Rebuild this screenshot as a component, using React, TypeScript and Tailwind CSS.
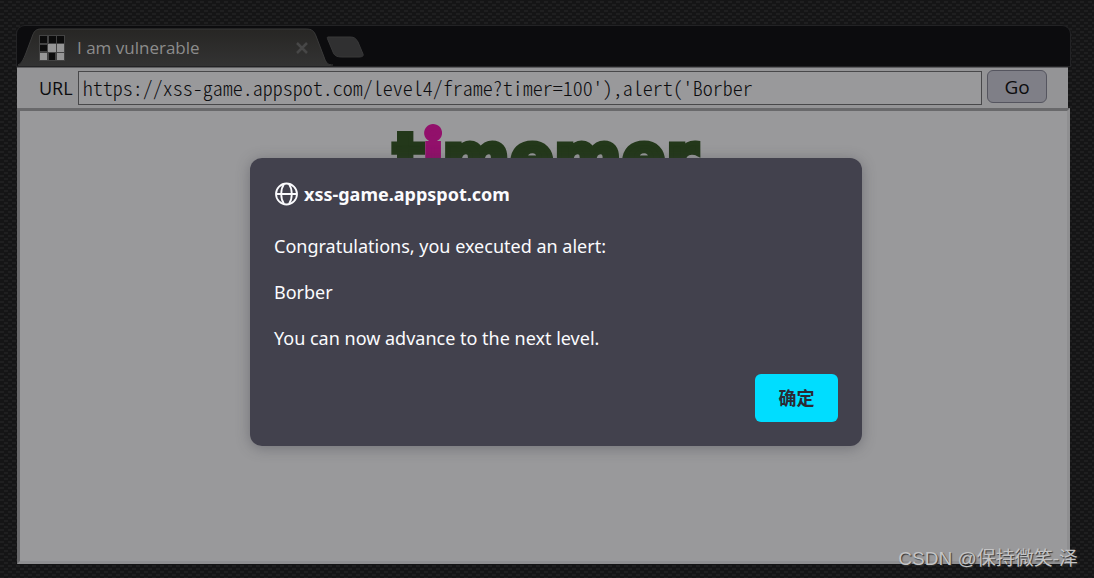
import { useState } from "react"

const lines = ["Congratulations, you executed an alert:", "Borber", "You can now advance to the next level."]

function TabShape() {
    return (
        <svg className="absolute inset-0" width="348" height="40" viewBox="0 0 348 40" fill="none" aria-hidden="true">
            <defs>
                <linearGradient id="tab" x1="0" y1="0" x2="0" y2="1">
                    <stop offset="0" stopColor="#272624" />
                    <stop offset="1" stopColor="#333333" />
                </linearGradient>
            </defs>
            <path d="M0 40C5 38 6 34 9 27L15 11C17 5 19 3 24 3H289C295 3 297 5 299 10L307 31C309 37 311 39 316 40Z" fill="url(#tab)" />
            <path d="M1 39C5 37 6 34 9 27L15 11C17 5 19 3 24 3H289C295 3 297 5 299 10L307 31C309 37 311 39 316 39" stroke="#3a3a3a" />
            <path d="M311 11H333C338 11 339 13 341 16L346 28C347 30 345 31 342 31H325C319 31 317 29 316 26L311 14C310 12 310 11 311 11Z" fill="#303031" stroke="#383839" />
        </svg>
    )
}

function Favicon() {
    return (
        <svg width="26" height="26" viewBox="0 0 26 26" aria-hidden="true">
            <rect width="26" height="26" fill="#434343" />
            <path d="M1 1h7v7H1zM10 1h7v7h-7zM18 1h7v7h-7zM1 10h7v6H1zM10 18h6v7h-6z" fill="#0c0c0c" />
            <path d="M9 9h8v8H9zM18 9h7v8h-7zM1 18h7v7H1zM18 18h7v7h-7z" fill="#969696" />
        </svg>
    )
}

function Globe() {
    return (
        <svg width="24" height="24" viewBox="0 0 24 24" fill="none" stroke="#fbfbfe" strokeWidth="1.8" aria-hidden="true">
            <circle cx="12.5" cy="12" r="10.5" />
            <path d="M2 12H23M10 2C6.300 7.500 6.300 16.500 10 22M15 2C18.700 7.500 18.700 16.500 15 22" />
        </svg>
    )
}

export default function App() {
    const [url, setUrl] = useState("https://xss-game.appspot.com/level4/frame?timer=100'),alert('Borber")
    const [open, setOpen] = useState(true)

    return (
        <main className="relative flex min-h-screen flex-col bg-[#19191a] bg-[linear-gradient(#151516_0_1px,transparent_1px_3px,#151516_3px_4px,transparent_4px_6px),repeating-conic-gradient(#151516_0_25%,#1f1f20_0_50%)] bg-[length:8px_6px] pt-[26px] pr-6 pb-[14px] pl-[17px] font-['Open_Sans','Noto_Sans_CJK_SC',sans-serif]">
            <header className="relative h-10 rounded-t-lg bg-[#0c0c0e] ring-1 ring-[#232325]">
                <TabShape />
                <div className="relative flex h-10 w-[291px] items-center pt-1 pl-[22px] text-[17px] text-[#8c8c8c]">
                    <Favicon />
                    <span className="ml-3 grow">I am vulnerable</span>
                    <button aria-label="Close tab" className="text-[#474747]">
                        <svg width="12" height="12" viewBox="0 0 12 12" stroke="currentColor" strokeWidth="2.500"><path d="M1 1L11 11M11 1L1 11" /></svg>
                    </button>
                </div>
            </header>
            <form onSubmit={(e) => e.preventDefault()} className="mr-[2px] flex h-[42px] items-center border-t-2 border-[#5f5f61] bg-[#949496] pr-[21px] pl-[22px] text-[#0c0c0e]">
                <label htmlFor="url" className="mr-[5px] text-[18px]">URL</label>
                <input id="url" value={url} onChange={(e) => setUrl(e.target.value)} className="h-[34px] min-w-0 grow border border-[#48484a] bg-[#99999b] px-1 pb-[2px] font-['Noto_Sans_CJK_SC',monospace] text-[20px] font-light [font-feature-settings:'hwid']" />
                <button className="mb-[3px] ml-[5px] h-[33px] w-[60px] rounded-md border border-[#55555f] bg-[#7f7f87] pt-[2px] text-[19px]">Go</button>
            </form>
            <section className="grow border-3 border-t-[#69696b] border-r-[#8f8f91] border-b-[#8f8f91] border-l-[#69696b] bg-[#99999b] pt-[2px] pl-1 text-center">
                <h1 className="text-[65px] leading-[80px] font-bold text-[#23381a] font-['DejaVu_Sans',sans-serif] [-webkit-text-stroke:5px_#23381a]">
                    t<span className="text-[70px] font-['Lato',sans-serif] font-black text-[#92106b] [-webkit-text-stroke:6px_#92106b]">i</span>memer
                </h1>
            </section>
            {open && (
                <div className="absolute inset-x-0 top-[158px] flex justify-center pl-[18px]">
                    <div role="alertdialog" aria-labelledby="site" className="w-[612px] rounded-xl bg-[#42414d] p-6 text-[18px] leading-[23px] text-[#fbfbfe] shadow-[0_2px_14px_rgba(58,57,68,0.4)] font-['Noto_Sans','Noto_Sans_CJK_SC',sans-serif]">
                        <h2 id="site" className="flex items-center gap-[6px] leading-6 font-bold"><Globe />xss-game.appspot.com</h2>
                        <div className="mt-[29px] flex flex-col gap-[23px]">
                            {lines.map((line) => <p key={line}>{line}</p>)}
                        </div>
                        <div className="mt-6 flex justify-end">
                            <button onClick={() => setOpen(false)} className="h-12 w-[83px] rounded-md bg-[#00ddff] font-bold text-[#2b2a33]">确定</button>
                        </div>
                    </div>
                </div>
            )}
            <p className="absolute right-4 bottom-1 text-[19px] leading-[30px] text-[#c4c4c5] font-['Liberation_Sans','Noto_Sans_CJK_SC',sans-serif] [text-shadow:1px_1px_1px_#333]">CSDN @保持微笑-泽</p>
        </main>
    )
}
